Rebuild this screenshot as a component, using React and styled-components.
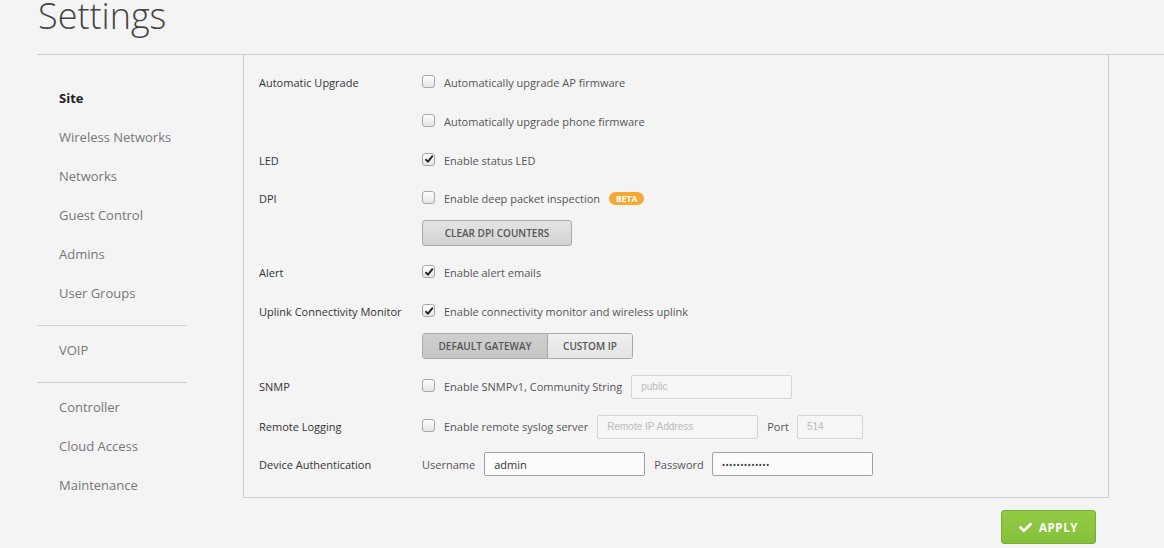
import React from "react";
import styled, { createGlobalStyle } from "styled-components";
import { FaCheck } from "react-icons/fa";

const GlobalStyle = createGlobalStyle`
  html, body {
    margin: 0;
    padding: 0;
    background: #f4f4f4;
    font-family: "Open Sans", "Noto Sans", sans-serif;
  }
`;

const Page = styled.div`
  width: 1164px;
  height: 548px;
  overflow: hidden;
  background: #f4f4f4;
`;

const Header = styled.div`
  margin-left: 37px;
  height: 54px;
  border-bottom: 1px solid #cfcfcf;
`;

const Title = styled.h1`
  margin: 0;
  padding: 1px 0 0 1px;
  font-size: 36px;
  line-height: 30px;
  font-weight: 300;
  color: #444;
`;

const Body = styled.div`
  display: flex;
  margin-left: 37px;
`;

const Sidebar = styled.nav`
  width: 206px;
  flex-shrink: 0;
  padding-top: 23px;
`;

const NavItem = styled.div`
  height: 39px;
  display: flex;
  align-items: center;
  padding-left: 22px;
  font-size: 13px;
  color: ${(p) => (p.active ? "#222" : "#777")};
  font-weight: ${(p) => (p.active ? 700 : 400)};
`;

const NavDivider = styled.div`
  width: 150px;
  height: 1px;
  background: #cfcfcf;
  margin: 13px 0 4px;
`;

const Main = styled.div`
  width: 866px;
  display: flex;
  flex-direction: column;
`;

const Panel = styled.div`
  border: 1px solid #cfcfcf;
  border-top: none;
  padding: 8px 0 15px 15px;
`;

const Row = styled.div`
  display: flex;
  align-items: center;
  height: ${(p) => p.h || 39}px;
`;

const Label = styled.div`
  width: 163px;
  flex-shrink: 0;
  font-size: 11px;
  color: #333;
`;

const Controls = styled.div`
  display: flex;
  align-items: center;
`;

const Box = styled.span`
  width: 11px;
  height: 11px;
  border: 1px solid #a8a8a8;
  border-radius: 3px;
  background: linear-gradient(#ffffff, #e4e4e4);
  display: inline-flex;
  align-items: center;
  justify-content: center;
  margin-right: 9px;
  margin-top: -2px;
`;

const Text = styled.span`
  font-size: 11px;
  color: #555;
`;

const Checkbox = ({ checked }) => (
  <Box>
    {checked && (
      <svg width="10" height="10" viewBox="0 0 10 10">
        <path d="M1.5 5.2 L4 7.6 L8.8 1.6" fill="none" stroke="#222" strokeWidth="1.9" />
      </svg>
    )}
  </Box>
);

const Badge = styled.span`
  margin-left: 9px;
  height: 13px;
  padding: 0 7px;
  border-radius: 7px;
  background: #f5a833;
  color: #fff;
  font-size: 8.5px;
  font-weight: 700;
  line-height: 13px;
`;

const ButtonRow = styled.div`
  padding: 2px 0 7px 163px;
  display: flex;
`;

const GreyButton = styled.button`
  height: 26px;
  width: ${(p) => p.w}px;
  padding: 0;
  border: 1px solid #a9a9a9;
  border-radius: 3px;
  background: linear-gradient(#e4e4e4, #d2d2d2);
  font-family: inherit;
  font-size: 10px;
  font-weight: 600;
  color: #555;
`;

const Segment = styled.div`
  display: flex;
  border: 1px solid #a9a9a9;
  border-radius: 3px;
  overflow: hidden;
  height: 24px;
`;

const SegmentItem = styled.div`
  width: ${(p) => p.w}px;
  display: flex;
  align-items: center;
  justify-content: center;
  font-size: 10px;
  font-weight: 600;
  color: #555;
  background: ${(p) => (p.active ? "linear-gradient(#cfcfcf, #c6c6c6)" : "linear-gradient(#f0f0f0, #e4e4e4)")};
  & + & {
    border-left: 1px solid #a9a9a9;
  }
`;

const Input = styled.div`
  box-sizing: border-box;
  width: ${(p) => p.w || 161}px;
  height: ${(p) => p.hgt || 24}px;
  margin-left: ${(p) => p.ml || 9}px;
  border: 1px solid ${(p) => (p.active ? "#a0a0a0" : "#d4d4d4")};
  border-radius: 2px;
  background: ${(p) => (p.active ? "#fbfbfb" : "#f6f6f6")};
  padding-left: 9px;
  display: flex;
  align-items: center;
  font-size: ${(p) => (p.ph ? "10px" : "11px")};
  font-family: ${(p) => (p.ph ? "'Liberation Sans', Arial, sans-serif" : "inherit")};
  color: ${(p) => (p.ph ? "#bbb" : "#333")};
`;

const Dots = styled.span`
  font-size: 9px;
  letter-spacing: 0.3px;
  color: #333;
`;

const FieldLabel = styled.span`
  font-size: 11px;
  color: #555;
  margin-left: ${(p) => p.ml || 0}px;
`;

const Footer = styled.div`
  display: flex;
  justify-content: flex-end;
  padding: 12px 13px 0 0;
`;

const ApplyButton = styled.button`
  width: 95px;
  height: 34px;
  border: 1px solid #78ad34;
  border-radius: 3px;
  background: linear-gradient(#93cb45, #86c03a);
  color: #fff;
  font-family: inherit;
  font-size: 11.5px;
  font-weight: 700;
  letter-spacing: 0.6px;
  display: flex;
  align-items: center;
  justify-content: center;
  gap: 7px;
  padding: 0;
`;

const navTop = ["Site", "Wireless Networks", "Networks", "Guest Control", "Admins", "User Groups"];
const navBottom = ["Controller", "Cloud Access", "Maintenance"];

const App = () => {
  return (
    <Page>
      <GlobalStyle />
      <Header>
        <Title>Settings</Title>
      </Header>
      <Body>
        <Sidebar>
          {navTop.map((n) => (
            <NavItem key={n} active={n === "Site"}>{n}</NavItem>
          ))}
          <NavDivider />
          <NavItem>VOIP</NavItem>
          <NavDivider />
          {navBottom.map((n) => (
            <NavItem key={n}>{n}</NavItem>
          ))}
        </Sidebar>
        <Main>
          <Panel>
            <Row>
              <Label>Automatic Upgrade</Label>
              <Controls>
                <Checkbox />
                <Text>Automatically upgrade AP firmware</Text>
              </Controls>
            </Row>
            <Row>
              <Label />
              <Controls>
                <Checkbox />
                <Text>Automatically upgrade phone firmware</Text>
              </Controls>
            </Row>
            <Row h={38}>
              <Label>LED</Label>
              <Controls>
                <Checkbox checked />
                <Text>Enable status LED</Text>
              </Controls>
            </Row>
            <Row>
              <Label>DPI</Label>
              <Controls>
                <Checkbox />
                <Text>Enable deep packet inspection</Text>
                <Badge>BETA</Badge>
              </Controls>
            </Row>
            <ButtonRow>
              <GreyButton w={150}>CLEAR DPI COUNTERS</GreyButton>
            </ButtonRow>
            <Row>
              <Label>Alert</Label>
              <Controls>
                <Checkbox checked />
                <Text>Enable alert emails</Text>
              </Controls>
            </Row>
            <Row>
              <Label>Uplink Connectivity Monitor</Label>
              <Controls>
                <Checkbox checked />
                <Text>Enable connectivity monitor and wireless uplink</Text>
              </Controls>
            </Row>
            <ButtonRow>
              <Segment>
                <SegmentItem w={124} active>DEFAULT GATEWAY</SegmentItem>
                <SegmentItem w={84}>CUSTOM IP</SegmentItem>
              </Segment>
            </ButtonRow>
            <Row h={41}>
              <Label>SNMP</Label>
              <Controls>
                <Checkbox />
                <Text>Enable SNMPv1, Community String</Text>
                <Input ph>public</Input>
              </Controls>
            </Row>
            <Row>
              <Label>Remote Logging</Label>
              <Controls>
                <Checkbox />
                <Text>Enable remote syslog server</Text>
                <Input ph>Remote IP Address</Input>
                <FieldLabel ml={9}>Port</FieldLabel>
                <Input ph w={66} ml={8}>514</Input>
              </Controls>
            </Row>
            <Row h={36}>
              <Label>Device Authentication</Label>
              <Controls>
                <FieldLabel>Username</FieldLabel>
                <Input active>admin</Input>
                <FieldLabel ml={9}>Password</FieldLabel>
                <Input active ml={8}>
                  <Dots>•••••••••••••</Dots>
                </Input>
              </Controls>
            </Row>
          </Panel>
          <Footer>
            <ApplyButton>
              <FaCheck size={13} />
              APPLY
            </ApplyButton>
          </Footer>
        </Main>
      </Body>
    </Page>
  );
};

export default App;
